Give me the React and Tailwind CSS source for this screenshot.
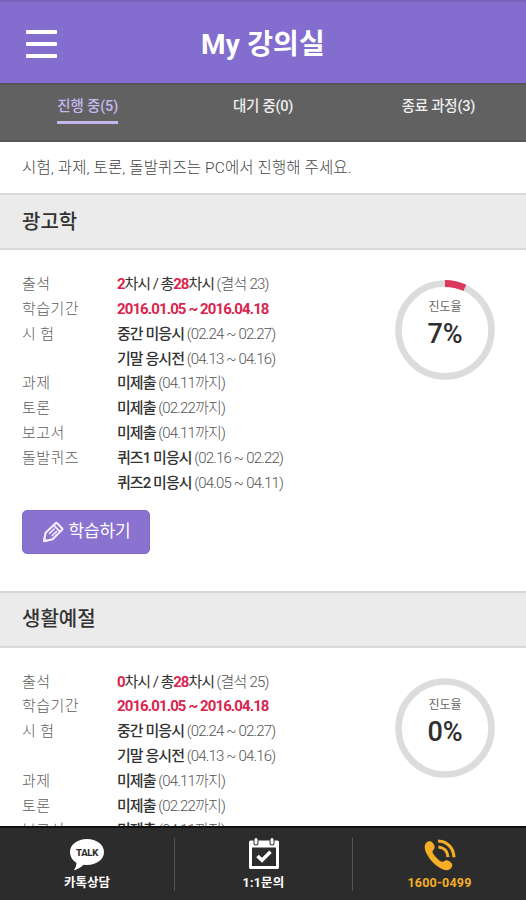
import React from 'react';

const tabs = [
  { label: '진행 중(5)', active: true },
  { label: '대기 중(0)' },
  { label: '종료 과정(3)' },
];

const courses = [
  { title: '광고학', attended: 2, total: 28, absent: 23, progress: 7 },
  { title: '생활예절', attended: 0, total: 28, absent: 25, progress: 0 },
];

const details = [
  { label: '시 험', status: '중간 미응시', date: '(02.24 ~ 02.27)' },
  { label: '', status: '기말 응시전', date: '(04.13 ~ 04.16)' },
  { label: '과제', status: '미제출', date: '(04.11까지)' },
  { label: '토론', status: '미제출', date: '(02.22까지)' },
  { label: '보고서', status: '미제출', date: '(04.11까지)' },
  { label: '돌발퀴즈', status: '퀴즈1 미응시', date: '(02.16 ~ 02.22)' },
  { label: '', status: '퀴즈2 미응시', date: '(04.05 ~ 04.11)' },
];

const Row = ({ label, children }) => (
  <div className="flex h-[24.8px] items-center whitespace-nowrap text-[15px]">
    <dt className="w-[95px] shrink-0 font-light tracking-[0.45px] text-[#5c5c5c]">{label}</dt>
    <dd className="tracking-[-1.05px] text-[#333]">{children}</dd>
  </div>
);

const ProgressRing = ({ value }) => {
  const length = 2 * Math.PI * 46.5;
  return (
    <div className="relative h-[100px] w-[100px] shrink-0">
      <svg viewBox="0 0 100 100" className="h-full w-full -rotate-90">
        <circle cx="50" cy="50" r="46.5" fill="none" stroke="#dcdcdc" strokeWidth="6.5" />
        {value > 0 && (
          <circle
            cx="50"
            cy="50"
            r="46.5"
            fill="none"
            stroke="#d9395b"
            strokeWidth="7"
            strokeDasharray={`${(length * value) / 100} ${length}`}
          />
        )}
      </svg>
      <div className="absolute inset-0 flex flex-col items-center pt-[17px]">
        <span className="text-[12px] leading-[20px] text-[#666]">진도율</span>
        <span className="text-[27px] leading-[35px] font-medium tracking-[-0.1px] text-[#2f2f2f]">{value}%</span>
      </div>
    </div>
  );
};

const PencilIcon = () => (
  <svg width="22" height="22" viewBox="0 0 22 22" fill="none" stroke="#f4efff" strokeWidth="2.1" strokeLinejoin="round" strokeLinecap="round">
    <path d="M2 20.3 L3.6 11.8 L13.6 2.2 Q14.4 1.5 15.2 2.3 L20 7.2 Q20.7 8 20 8.8 L10.6 18.3 Z" />
    <path d="M2.2 17.6 L4.8 20 M12 4.6 L17.8 10.4" strokeWidth="1.7" />
    <path d="M7.6 12.4 L12.2 8 M10 14.8 L14.6 10.4" strokeWidth="1.5" />
  </svg>
);

const TalkIcon = () => (
  <svg width="36" height="34" viewBox="0 0 36 34">
    <path d="M18 1 C27.5 1 35 6.5 35 14 C35 21.5 27.5 27 18 27 C16.8 27 15.7 26.9 14.6 26.7 C11.5 29.5 8.4 31.2 4.8 32.4 C6.6 29.8 7.4 27.6 7.4 24.8 C3.4 22.4 1 18.5 1 14 C1 6.5 8.5 1 18 1 Z" fill="#fff" />
    <text x="18" y="17.5" textAnchor="middle" fontSize="9.5" fontWeight="800" letterSpacing="-0.3" fill="#2c2c2c">TALK</text>
  </svg>
);

const CalendarIcon = () => (
  <svg width="32" height="32" viewBox="0 0 32 32">
    <path fillRule="evenodd" d="M2.5 2.5 H29.5 Q31 2.5 31 4 V29.5 Q31 31 29.5 31 H2.5 Q1 31 1 29.5 V4 Q1 2.5 2.5 2.5 Z M4 9.5 V28 H28 V9.5 Z" fill="#fff" />
    <path d="M8 1.5 V5 M24 1.5 V5" stroke="#2c2c2c" strokeWidth="5" strokeLinecap="round" />
    <path d="M8 1.5 V5 M24 1.5 V5" stroke="#fff" strokeWidth="3" strokeLinecap="round" />
    <path d="M9.5 18 L14 22.3 L22.5 13.8" fill="none" stroke="#fff" strokeWidth="3.6" />
  </svg>
);

const PhoneIcon = () => (
  <svg width="34" height="34" viewBox="0 0 34 34" fill="none">
    <path d="M3.2 4.8 C5 2.8 8 2.8 9.4 4.6 C11.2 6.8 12.2 8.6 11.4 10.6 C10.8 12 9 12.6 9.6 14.4 C10.9 17.6 15.2 21.8 18.4 23.6 C20.3 24.6 21.2 22.4 23.1 22.2 C25.1 22 27.4 23.6 28.8 25.4 C30 27 29.2 29.4 27.2 31 C24.3 33.2 20 32.2 15.2 28.8 C9.5 24.7 4.8 18.8 2.6 13.4 C1.2 10 1.4 6.8 3.2 4.8 Z" fill="#f6ae26" />
    <path d="M15 3 C24 3.2 30.6 9.8 31 19.2 M15.4 9 C21 9.6 24.6 13.4 25 19.2" stroke="#f6ae26" strokeWidth="3.1" />
  </svg>
);

const Course = ({ course }) => (
  <section className="h-[397.5px] shrink-0">
    <h2 className="flex h-[57px] items-center border-y-2 border-[#d9d9d9] bg-[#ebebeb] px-[22px] text-[20px] font-medium text-[#333]">
      {course.title}
    </h2>
    <div className="flex justify-between pt-[22px] pr-[31px] pl-[22px]">
      <dl>
        <Row label="출석">
          <b className="font-bold text-[#d9264f]">{course.attended}</b>차시 / 총
          <b className="font-bold text-[#d9264f]">{course.total}</b>차시{' '}
          <span className="font-light tracking-[-0.8px] text-[#555]">(결석 {course.absent})</span>
        </Row>
        <Row label="학습기간">
          <span className="font-bold tracking-[-0.9px] text-[#d9264f]">2016.01.05 ~ 2016.04.18</span>
        </Row>
        {details.map((item) => (
          <Row key={item.status + item.label} label={item.label}>
            <span className="font-medium tracking-[-0.95px]">{item.status}</span>{' '}
            <span className="font-light tracking-[-0.82px] text-[#555]">{item.date}</span>
          </Row>
        ))}
      </dl>
      <div className="pt-[8px]">
        <ProgressRing value={course.progress} />
      </div>
    </div>
    <button className="mt-[15px] ml-[22px] flex h-[44px] w-[128px] items-center justify-center gap-[5px] rounded-[5px] border border-[#7f6bc4] bg-[#8a73d0] text-[17px] tracking-[-0.2px] text-white">
      <PencilIcon />
      학습하기
    </button>
  </section>
);

const App = () => {
  return (
    <div className="flex h-[900px] w-[526px] flex-col overflow-hidden bg-white font-[Roboto,'Noto_Sans_CJK_KR',sans-serif]">
      {/* --- HEADER --- */}
      <header className="grid h-[83px] shrink-0 grid-cols-[1fr_auto_1fr] items-center border-t-2 border-[#7662b8] bg-[#836dce] pt-[3px] pl-[26px] pr-[26px]">
        <button className="flex w-[31px] flex-col gap-[8px] pb-[1px]">
          <span className="h-[4px] rounded-[1px] bg-white" />
          <span className="h-[4px] rounded-[1px] bg-white" />
          <span className="h-[4px] rounded-[1px] bg-white" />
        </button>
        <h1 className="pt-[2px] text-[28px] font-bold tracking-[0.2px] text-white">My 강의실</h1>
      </header>

      {/* --- TABS --- */}
      <nav className="grid h-[59px] shrink-0 grid-cols-3 border-y-2 border-[#565656] bg-[#606160] pt-[11px]">
        {tabs.map((tab) => (
          <div key={tab.label} className="flex justify-center">
            <span
              className={
                tab.active
                  ? 'h-[28px] border-b-3 border-[#c5b6ee] text-[14.5px] leading-[22px] font-medium tracking-[-0.15px] text-[#c5b6ee]'
                  : 'text-[14.5px] leading-[22px] font-medium tracking-[-0.25px] text-[#eee]'
              }
            >
              {tab.label}
            </span>
          </div>
        ))}
      </nav>

      <main className="flex min-h-0 flex-1 flex-col overflow-hidden">
        <p className="flex h-[51px] shrink-0 items-center px-[22px] pt-[2px] text-[15.5px] font-light tracking-[0.12px] text-[#444]">
          시험, 과제, 토론, 돌발퀴즈는 PC에서 진행해 주세요.
        </p>
        {courses.map((course) => (
          <Course key={course.title} course={course} />
        ))}
      </main>

      {/* --- BOTTOM BAR --- */}
      <footer className="grid h-[74px] shrink-0 grid-cols-[175px_178px_173px] items-center border-t-2 border-[#111] bg-[#2c2c2c] text-[12.5px] leading-[16px] font-bold text-white">
        <div className="flex h-[53px] flex-col items-center justify-between border-r border-[#555]">
          <TalkIcon />
          <span>카톡상담</span>
        </div>
        <div className="flex h-[53px] flex-col items-center justify-between border-r border-[#555]">
          <CalendarIcon />
          <span className="tracking-[0.2px]">1:1문의</span>
        </div>
        <div className="flex h-[53px] flex-col items-center justify-between text-[#f6ae26]">
          <PhoneIcon />
          <span className="tracking-[0.2px]">1600-0499</span>
        </div>
      </footer>
    </div>
  );
};

export default App;
